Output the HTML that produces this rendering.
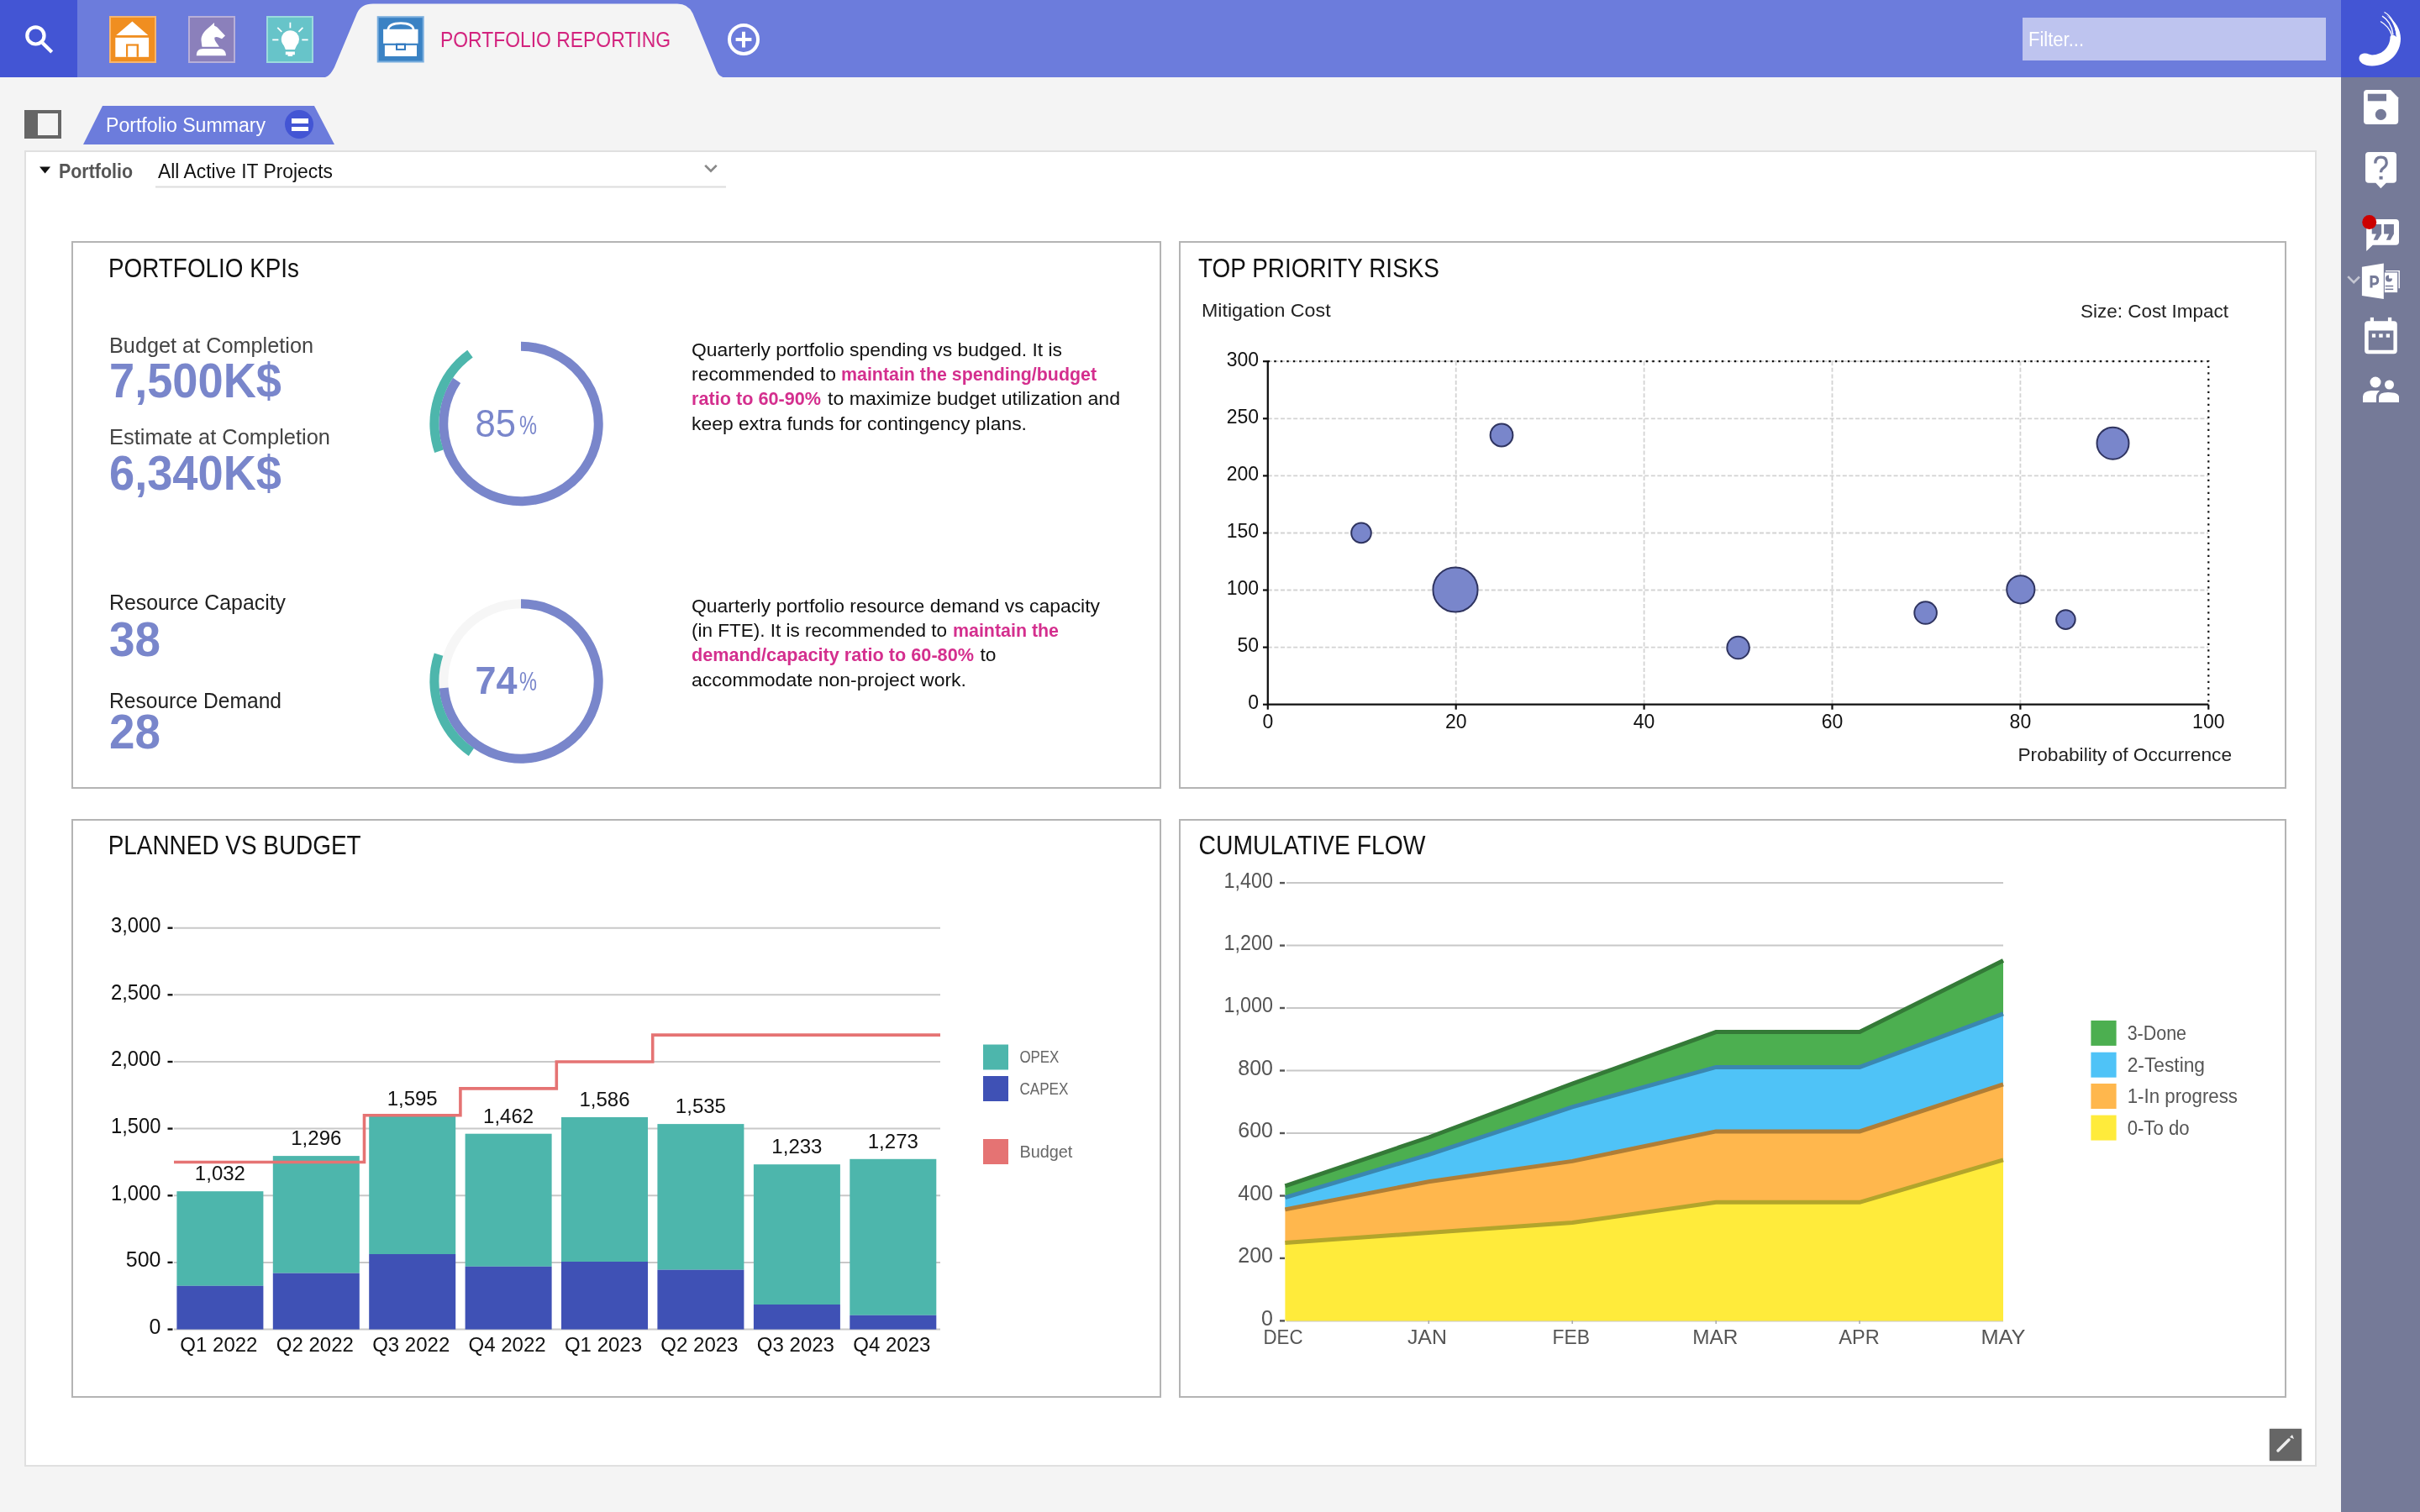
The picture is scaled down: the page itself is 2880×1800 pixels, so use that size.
<!DOCTYPE html>
<html><head><meta charset="utf-8">
<style>
html,body{margin:0;padding:0;width:2880px;height:1800px;overflow:hidden;background:#f4f4f4;font-family:"Liberation Sans",sans-serif;}
.abs{position:absolute;}
svg{position:absolute;left:0;top:0;overflow:visible;will-change:transform}
text{font-family:"Liberation Sans",sans-serif;}
</style></head><body>
<!-- top bar -->
<div class="abs" style="left:0;top:0;width:2786px;height:92px;background:#6c7cdc"></div>
<div class="abs" style="left:0;top:0;width:92px;height:92px;background:#4355d4"></div>
<!-- sidebar -->
<div class="abs" style="left:2786px;top:0;width:94px;height:1800px;background:#757a98"></div>
<div class="abs" style="left:2786px;top:0;width:94px;height:92px;background:#4355d4"></div>
<!-- filter -->
<div class="abs" style="left:2407px;top:21px;width:361px;height:51px;background:#bec4ef"></div>
<!-- content panel -->
<div class="abs" style="left:29px;top:179px;width:2724px;height:1563px;background:#fff;border:2px solid #e0e0e0"></div>
<!-- panels -->
<div class="abs" style="left:85px;top:287px;width:1293px;height:648px;border:2px solid #b4b4b4"></div>
<div class="abs" style="left:1403px;top:287px;width:1314px;height:648px;border:2px solid #b4b4b4"></div>
<div class="abs" style="left:85px;top:975px;width:1293px;height:685px;border:2px solid #b4b4b4"></div>
<div class="abs" style="left:1403px;top:975px;width:1314px;height:685px;border:2px solid #b4b4b4"></div>
<!-- pencil button -->
<div class="abs" style="left:2701px;top:1701px;width:38px;height:38px;background:#666;box-shadow:0 0 2px rgba(0,0,0,0.35)"></div>

<svg id="chrome" width="2880" height="1800" viewBox="0 0 2880 1800">
  <!-- active tab -->
  <path d="M383 92.5 C390 92.5 394 88 398 80 L425 15.5 C429 8 434 4.6 444 4.6 L806 4.6 Q819 4.6 824.5 16 L852.5 84 Q856 92.5 864 92.5 Z" fill="#f4f4f4"/>
  <!-- search icon -->
  <circle cx="42.4" cy="42.4" r="10.1" fill="none" stroke="#fff" stroke-width="4.2"/>
  <line x1="50.5" y1="51" x2="61.7" y2="62" stroke="#fff" stroke-width="4.2"/>
  <!-- home -->
  <rect x="131" y="20" width="54" height="54" fill="#f08e20" stroke="#f6b56f" stroke-width="2"/>
  <path d="M157.4 25.6 L176.3 42.1 L138.2 42.1 Z" fill="#fff"/>
  <rect x="137.3" y="44.8" width="39.8" height="23" fill="#fff"/>
  <rect x="150" y="52.4" width="15" height="15.4" fill="#f08e20"/>
  <rect x="152.2" y="54.6" width="10.4" height="13.2" fill="#fff"/>
  <!-- knight -->
  <rect x="225" y="20" width="54" height="54" fill="#8b80bb" stroke="#b7afd8" stroke-width="2"/>
  <path d="M255 27 L250 31.5 C244 36 239 42 239.5 48 C240 52 240 54 240.5 55.7 L261 55.7 C258 51 254.5 48 255.5 44.6 C257 43.5 259 44 260 44.5 L264 46.3 L268 42.4 L259 33 C257.5 31.5 256 31 255 30.5 Z" fill="#fff"/>
  <path d="M233.8 66.3 C233.8 61 236 58 242 58 L261 58 C266 58 268.9 61 268.9 66.3 Z" fill="#fff"/>
  <!-- bulb -->
  <rect x="318" y="20" width="54" height="54" fill="#67c4c9" stroke="#9bdbdd" stroke-width="2"/>
  <circle cx="345.4" cy="46.8" r="10.6" fill="#fff"/>
  <path d="M336.5 51 L354.3 51 L350.9 59 L339.8 59 Z" fill="#fff"/>
  <rect x="339.8" y="61.5" width="11.1" height="3.7" fill="#fff"/>
  <rect x="342.6" y="65" width="5.6" height="2" fill="#fff"/>
  <g stroke="#fff" stroke-width="1.8"><line x1="345.4" y1="26.7" x2="345.4" y2="33.4"/><line x1="324.2" y1="47.4" x2="331.4" y2="47.4"/><line x1="359.3" y1="47.4" x2="366.6" y2="47.4"/><line x1="330.3" y1="32.9" x2="335.3" y2="37.9"/><line x1="360.4" y1="32.9" x2="355.4" y2="37.9"/></g>
  <!-- briefcase -->
  <rect x="449.7" y="20.2" width="54" height="53.3" fill="#3a82c4" stroke="#7aaede" stroke-width="2"/>
  <path d="M461.8 35.5 C462.5 29.5 469.5 27.7 477 27.7 C484.5 27.7 491.5 29.5 492.2 35.5" fill="none" stroke="#fff" stroke-width="2.7"/>
  <rect x="456.1" y="34.8" width="41.4" height="16.9" fill="#fff"/>
  <rect x="457.9" y="53.9" width="38.1" height="13.1" fill="#fff"/>
  <rect x="471" y="51.7" width="12" height="8.2" fill="#2f78c0"/>
  <rect x="473" y="53.9" width="8" height="4" fill="#fff"/>
  <!-- plus circle -->
  <circle cx="885" cy="47" r="17" fill="none" stroke="#fff" stroke-width="4"/>
  <path d="M885 37.7 V56.5 M875.6 47.1 H894.4" stroke="#fff" stroke-width="4"/>
  <!-- sidebar toggle -->
  <rect x="31" y="133" width="40" height="30" fill="none" stroke="#666" stroke-width="4"/>
  <rect x="29" y="131" width="16" height="34" fill="#666"/>
  <!-- portfolio summary tab -->
  <path d="M99 172 L122 126 L374 126 L398 172 Z" fill="#6c7cdc"/>
  <circle cx="356" cy="148" r="17" fill="#4355d4"/>
  <rect x="347" y="141" width="20" height="6" fill="#fff"/>
  <rect x="347" y="151" width="20" height="5" fill="#fff"/>
  <!-- dropdown -->
  <path d="M47 198.6 H60.1 L53.6 206.6 Z" fill="#111"/>
  <line x1="185" y1="222.5" x2="864" y2="222.5" stroke="#ddd" stroke-width="2"/>
  <path d="M839.2 196.9 L846 203.6 L852.7 196.9" fill="none" stroke="#888" stroke-width="2.7"/>
  <!-- logo -->
  <path d="M2840 18 C2851 25 2857 35 2857 46 C2857 64 2842 78.5 2823 78.5 C2813 78.5 2807.5 74 2807.5 69.5 C2807.5 65 2811 63.5 2815 63.5 C2818 63.5 2820 65.4 2823 65.4 C2836 65.4 2844.5 55 2844.5 44 C2845 41 2849 41 2852 44 C2851 33 2847 24 2840 18 Z" fill="#fff"/>
  <g fill="none" stroke="#fff" stroke-width="1.4">
  <path d="M2837.5 14.5 C2846 19 2851 29 2852.5 43"/>
  <path d="M2835 19.2 C2841.5 23 2846.5 31 2848 41.5"/>
  <path d="M2833 25.5 C2839 29 2844.5 35 2846.5 42"/>
  </g>
  <!-- save -->
  <path d="M2817 107 H2845 L2854.2 116.3 V144 Q2854.2 148 2850.2 148 H2817 Q2813 148 2813 144 V111 Q2813 107 2817 107 Z" fill="#fff"/>
  <rect x="2817.8" y="111.7" width="22.2" height="8.6" fill="#757a98"/>
  <circle cx="2833.4" cy="136.4" r="6.6" fill="#757a98"/>
  <!-- help -->
  <path d="M2819 181 H2848 Q2852 181 2852 185 V213.7 Q2852 217.7 2848 217.7 H2839.8 L2833.3 224.2 L2827.3 217.7 H2819 Q2815 217.7 2815 213.7 V185 Q2815 181 2819 181 Z" fill="#fff"/>
  <path d="M2826.8 194.5 Q2826.8 187.2 2833.5 187.2 Q2840.2 187.2 2840.2 193.8 Q2840.2 197.8 2836 200.3 Q2833.5 202 2833.5 205.2" fill="none" stroke="#757a98" stroke-width="3.3"/>
  <rect x="2831.5" y="209.8" width="4.1" height="3.8" fill="#757a98"/>
  <!-- quote -->
  <path d="M2819 261 H2851 Q2855 261 2855 265 V287.8 Q2855 291.8 2851 291.8 H2823.8 L2816.2 299 V265 Q2816.2 261 2819 261 Z" fill="#fff"/>
  <path d="M2822.7 267 H2834.1 V278.5 L2829.5 285.7 H2824.6 L2828 278.5 H2822.7 Z M2837.1 267 H2848.9 V278.5 L2844.8 285.7 H2839.8 L2843.2 278.5 H2837.1 Z" fill="#757a98"/>
  <circle cx="2819.7" cy="264.6" r="8.5" fill="#cc0000"/>
  <!-- ppt -->
  <path d="M2794.2 329.1 L2801.2 336.2 L2807.9 329.5" fill="none" stroke="#c4c6d2" stroke-width="2.6"/>
  <path d="M2810.9 317.7 L2836.8 313.5 V356.1 L2810.9 351.9 Z" fill="#fff"/>
  <path d="M2822 342.5 V329.5 H2825.5 Q2829.7 329.5 2829.7 333.7 Q2829.7 337.9 2825.5 337.9 H2822" fill="none" stroke="#757a98" stroke-width="3"/>
  <rect x="2837.9" y="324.5" width="15.2" height="23.6" fill="#fff"/>
  <path d="M2839 322.6 H2855.2 V343.2" fill="none" stroke="#fff" stroke-width="1.4"/>
  <path d="M2843 327.5 A4 4 0 1 0 2847 331.5 H2843 Z" fill="#757a98"/>
  <rect x="2838.7" y="339.8" width="9.5" height="1.5" fill="#757a98"/>
  <rect x="2838.7" y="343.6" width="9.5" height="1.5" fill="#757a98"/>
  <!-- calendar -->
  <path d="M2818.1 382.3 H2848.8 Q2852.8 382.3 2852.8 386.3 V417.2 Q2852.8 421.2 2848.8 421.2 H2818.1 Q2814.1 421.2 2814.1 417.2 V386.3 Q2814.1 382.3 2818.1 382.3 Z M2818.7 393.4 V416.8 H2848.4 V393.4 Z" fill="#fff" fill-rule="evenodd"/>
  <rect x="2820.8" y="377.9" width="4.2" height="5" fill="#fff"/>
  <rect x="2841.9" y="377.9" width="4.3" height="5" fill="#fff"/>
  <rect x="2822.9" y="397.4" width="4.2" height="4.3" fill="#fff"/>
  <rect x="2831.2" y="397.4" width="4.5" height="4.3" fill="#fff"/>
  <rect x="2839.7" y="397.4" width="4.3" height="4.3" fill="#fff"/>
  <!-- people -->
  <circle cx="2827" cy="455" r="6.5" fill="#fff"/>
  <circle cx="2843.5" cy="458" r="5.5" fill="#fff"/>
  <path d="M2812 479 V472 Q2812 466 2822 465 L2832 465 Q2828 469 2828 472 V479 Z" fill="#fff"/>
  <path d="M2831 479 V473 Q2831 467 2842 467 Q2855 467 2855 473 V479 Z" fill="#fff"/>
  <!-- pencil -->
  <path d="M2711 1727 L2724 1714" stroke="#eee" stroke-width="3.5" stroke-linecap="round"/>
  <path d="M2725 1711 L2728 1708 L2730 1713 Z" fill="#eee"/>
</svg>

<svg id="texts" width="2880" height="1800" viewBox="0 0 2880 1800">
  <text x="524" y="55.5" font-size="26" fill="#d3237e" textLength="274" lengthAdjust="spacingAndGlyphs">PORTFOLIO REPORTING</text>
  <text x="2414" y="55" font-size="23" fill="#fff" textLength="66" lengthAdjust="spacingAndGlyphs">Filter...</text>
  <text x="126" y="156.5" font-size="23.5" fill="#fff" textLength="190" lengthAdjust="spacingAndGlyphs">Portfolio Summary</text>
  <text x="70" y="212" font-size="23.5" font-weight="bold" fill="#555" textLength="88" lengthAdjust="spacingAndGlyphs">Portfolio</text>
  <text x="188" y="212" font-size="23.5" fill="#111" textLength="208" lengthAdjust="spacingAndGlyphs">All Active IT Projects</text>
</svg>

<svg id="kpi" width="2880" height="1800" viewBox="0 0 2880 1800">
  <text x="129" y="330" font-size="30.5" fill="#111" textLength="227" lengthAdjust="spacingAndGlyphs">PORTFOLIO KPIs</text>
  <text x="130" y="420" font-size="25" fill="#444" textLength="243" lengthAdjust="spacingAndGlyphs">Budget at Completion</text>
  <text x="130" y="473" font-size="57.5" font-weight="bold" fill="#7986cb" textLength="205" lengthAdjust="spacingAndGlyphs">7,500K$</text>
  <text x="130" y="529" font-size="25" fill="#444" textLength="263" lengthAdjust="spacingAndGlyphs">Estimate at Completion</text>
  <text x="130" y="583" font-size="57.5" font-weight="bold" fill="#7986cb" textLength="205" lengthAdjust="spacingAndGlyphs">6,340K$</text>
  <text x="130" y="726" font-size="25" fill="#222" textLength="210" lengthAdjust="spacingAndGlyphs">Resource Capacity</text>
  <text x="130" y="781" font-size="57.5" font-weight="bold" fill="#7986cb" textLength="61" lengthAdjust="spacingAndGlyphs">38</text>
  <text x="130" y="843" font-size="25" fill="#222" textLength="205" lengthAdjust="spacingAndGlyphs">Resource Demand</text>
  <text x="130" y="891" font-size="57.5" font-weight="bold" fill="#7986cb" textLength="61" lengthAdjust="spacingAndGlyphs">28</text>

    <path d="M620.00 412.30 A92.2 92.2 0 1 1 543.56 452.94" fill="none" stroke="#7986cb" stroke-width="11"/>
  <path d="M522.38 537.35 A103 103 0 0 1 559.46 421.17" fill="none" stroke="#4db6ac" stroke-width="11"/>
  <text x="565.5" y="520" font-size="46.5" fill="#7986cb" textLength="48.5" lengthAdjust="spacingAndGlyphs">85</text>
  <text x="618" y="516.5" font-size="31" fill="#7986cb" textLength="21" lengthAdjust="spacingAndGlyphs">%</text>

  <circle cx="620" cy="811" r="92.2" fill="none" stroke="#f6f6f6" stroke-width="11"/>
  <path d="M620.00 718.80 A92.2 92.2 0 1 1 528.15 819.04" fill="none" stroke="#7986cb" stroke-width="11"/>
  <path d="M560.92 895.37 A103 103 0 0 1 522.04 779.17" fill="none" stroke="#4db6ac" stroke-width="11"/>
  <text x="565.5" y="825.5" font-size="46.5" font-weight="bold" fill="#7986cb" textLength="50" lengthAdjust="spacingAndGlyphs">74</text>
  <text x="618" y="822" font-size="31" fill="#7986cb" textLength="21" lengthAdjust="spacingAndGlyphs">%</text>

  <g font-size="21.5" fill="#111">
  <text x="823" y="424" textLength="441" lengthAdjust="spacingAndGlyphs">Quarterly portfolio spending vs budged. It is</text>
  <text x="823" y="453" textLength="172" lengthAdjust="spacingAndGlyphs">recommended to</text>
  <text x="1001" y="453" font-weight="bold" fill="#d42f8e" textLength="304" lengthAdjust="spacingAndGlyphs">maintain the spending/budget</text>
  <text x="823" y="482" font-weight="bold" fill="#d42f8e" textLength="154" lengthAdjust="spacingAndGlyphs">ratio to 60-90%</text>
  <text x="985" y="482" textLength="348" lengthAdjust="spacingAndGlyphs">to maximize budget utilization and</text>
  <text x="823" y="511.5" textLength="399" lengthAdjust="spacingAndGlyphs">keep extra funds for contingency plans.</text>

  <text x="823" y="729" textLength="486" lengthAdjust="spacingAndGlyphs">Quarterly portfolio resource demand vs capacity</text>
  <text x="823" y="758" textLength="304" lengthAdjust="spacingAndGlyphs">(in FTE). It is recommended to</text>
  <text x="1134" y="758" font-weight="bold" fill="#d42f8e" textLength="126" lengthAdjust="spacingAndGlyphs">maintain the</text>
  <text x="823" y="787" font-weight="bold" fill="#d42f8e" textLength="336" lengthAdjust="spacingAndGlyphs">demand/capacity ratio to 60-80%</text>
  <text x="1166.5" y="787" textLength="19" lengthAdjust="spacingAndGlyphs">to</text>
  <text x="823" y="816.5" textLength="327" lengthAdjust="spacingAndGlyphs">accommodate non-project work.</text>
  </g>
</svg>
<!--CHARTS--><svg id="risk" width="2880" height="1800" viewBox="0 0 2880 1800">
<text x="1426" y="330.4" font-size="30.5" fill="#111" textLength="287" lengthAdjust="spacingAndGlyphs">TOP PRIORITY RISKS</text>
<text x="1430" y="377" font-size="21.5" fill="#222" textLength="153.6" lengthAdjust="spacingAndGlyphs">Mitigation Cost</text>
<text x="2476" y="377.6" font-size="21.5" fill="#222" textLength="176" lengthAdjust="spacingAndGlyphs">Size: Cost Impact</text>
<text x="2401.5" y="906" font-size="21.5" fill="#222" textLength="254.5" lengthAdjust="spacingAndGlyphs">Probability of Occurrence</text>
<g stroke="#d3d3d3" stroke-width="1.8" stroke-dasharray="5 2.6"><line x1="1508.8" y1="770.6" x2="2628.3" y2="770.6"/><line x1="1508.8" y1="702.5" x2="2628.3" y2="702.5"/><line x1="1508.8" y1="634.5" x2="2628.3" y2="634.5"/><line x1="1508.8" y1="566.4" x2="2628.3" y2="566.4"/><line x1="1508.8" y1="498.3" x2="2628.3" y2="498.3"/><line x1="1508.8" y1="430.2" x2="2628.3" y2="430.2"/><line x1="1732.7" y1="430.2" x2="1732.7" y2="838.7"/><line x1="1956.6" y1="430.2" x2="1956.6" y2="838.7"/><line x1="2180.5" y1="430.2" x2="2180.5" y2="838.7"/><line x1="2404.4" y1="430.2" x2="2404.4" y2="838.7"/></g>
<path d="M1508.8 430.2 H2628.3 V838.7" fill="none" stroke="#111" stroke-width="2.2" stroke-dasharray="2.4 5.1"/>
<path d="M1508.8 429.2 V838.7 H2628.3" fill="none" stroke="#111" stroke-width="2.3"/>
<g stroke="#111" stroke-width="2.2"><line x1="1503" y1="838.7" x2="1508.8" y2="838.7"/><line x1="1503" y1="770.6" x2="1508.8" y2="770.6"/><line x1="1503" y1="702.5" x2="1508.8" y2="702.5"/><line x1="1503" y1="634.5" x2="1508.8" y2="634.5"/><line x1="1503" y1="566.4" x2="1508.8" y2="566.4"/><line x1="1503" y1="498.3" x2="1508.8" y2="498.3"/><line x1="1503" y1="430.2" x2="1508.8" y2="430.2"/><line x1="1508.8" y1="838.7" x2="1508.8" y2="844.7"/><line x1="1732.7" y1="838.7" x2="1732.7" y2="844.7"/><line x1="1956.6" y1="838.7" x2="1956.6" y2="844.7"/><line x1="2180.5" y1="838.7" x2="2180.5" y2="844.7"/><line x1="2404.4" y1="838.7" x2="2404.4" y2="844.7"/><line x1="2628.3" y1="838.7" x2="2628.3" y2="844.7"/></g>
<g font-size="23" fill="#111"><text x="1498" y="844.3" text-anchor="end">0</text><text x="1498" y="776.2" text-anchor="end">50</text><text x="1498" y="708.1" text-anchor="end">100</text><text x="1498" y="640.1" text-anchor="end">150</text><text x="1498" y="572.0" text-anchor="end">200</text><text x="1498" y="503.9" text-anchor="end">250</text><text x="1498" y="435.8" text-anchor="end">300</text><text x="1508.8" y="867" text-anchor="middle">0</text><text x="1732.7" y="867" text-anchor="middle">20</text><text x="1956.6" y="867" text-anchor="middle">40</text><text x="2180.5" y="867" text-anchor="middle">60</text><text x="2404.4" y="867" text-anchor="middle">80</text><text x="2628.3" y="867" text-anchor="middle">100</text></g>
<g fill="#7986cb" stroke="#2f3460" stroke-width="2"><circle cx="1620" cy="634.4" r="11.8"/><circle cx="1732" cy="702" r="26.6"/><circle cx="1787" cy="518" r="13.4"/><circle cx="2068.6" cy="771" r="13.3"/><circle cx="2291.6" cy="729.5" r="13.3"/><circle cx="2404.8" cy="701.8" r="16.6"/><circle cx="2458.4" cy="737.6" r="11.3"/><circle cx="2514.5" cy="527.7" r="19"/></g>
</svg>
<svg id="pvb" width="2880" height="1800" viewBox="0 0 2880 1800">
<text x="128.7" y="1017" font-size="30.5" fill="#111" textLength="301" lengthAdjust="spacingAndGlyphs">PLANNED VS BUDGET</text>
<g stroke="#c8c8c8" stroke-width="2"><line x1="207" y1="1582.6" x2="1119" y2="1582.6"/><line x1="207" y1="1502.9" x2="1119" y2="1502.9"/><line x1="207" y1="1423.3" x2="1119" y2="1423.3"/><line x1="207" y1="1343.6" x2="1119" y2="1343.6"/><line x1="207" y1="1264.0" x2="1119" y2="1264.0"/><line x1="207" y1="1184.3" x2="1119" y2="1184.3"/><line x1="207" y1="1104.7" x2="1119" y2="1104.7"/></g>
<g stroke="#111" stroke-width="2.4"><line x1="199.5" y1="1582.6" x2="205.5" y2="1582.6"/><line x1="199.5" y1="1502.9" x2="205.5" y2="1502.9"/><line x1="199.5" y1="1423.3" x2="205.5" y2="1423.3"/><line x1="199.5" y1="1343.6" x2="205.5" y2="1343.6"/><line x1="199.5" y1="1264.0" x2="205.5" y2="1264.0"/><line x1="199.5" y1="1184.3" x2="205.5" y2="1184.3"/><line x1="199.5" y1="1104.7" x2="205.5" y2="1104.7"/></g>
<g font-size="25" fill="#111"><text x="191.5" y="1587.8" text-anchor="end">0</text><text x="191.5" y="1508.1" text-anchor="end">500</text><text x="191.5" y="1428.5" text-anchor="end" textLength="59.5" lengthAdjust="spacingAndGlyphs">1,000</text><text x="191.5" y="1348.8" text-anchor="end" textLength="59.5" lengthAdjust="spacingAndGlyphs">1,500</text><text x="191.5" y="1269.2" text-anchor="end" textLength="59.5" lengthAdjust="spacingAndGlyphs">2,000</text><text x="191.5" y="1189.5" text-anchor="end" textLength="59.5" lengthAdjust="spacingAndGlyphs">2,500</text><text x="191.5" y="1109.9" text-anchor="end" textLength="59.5" lengthAdjust="spacingAndGlyphs">3,000</text></g>
<rect x="210.4" y="1418.2" width="103" height="112.6" fill="#4db6ac"/><rect x="210.4" y="1530.8" width="103" height="51.8" fill="#3f51b5"/><rect x="324.8" y="1376.1" width="103" height="139.6" fill="#4db6ac"/><rect x="324.8" y="1515.7" width="103" height="66.9" fill="#3f51b5"/><rect x="439.2" y="1328.5" width="103" height="164.5" fill="#4db6ac"/><rect x="439.2" y="1493.0" width="103" height="89.6" fill="#3f51b5"/><rect x="553.6" y="1349.7" width="103" height="158.1" fill="#4db6ac"/><rect x="553.6" y="1507.8" width="103" height="74.8" fill="#3f51b5"/><rect x="668.0" y="1330.0" width="103" height="172.0" fill="#4db6ac"/><rect x="668.0" y="1502.0" width="103" height="80.6" fill="#3f51b5"/><rect x="782.4" y="1338.1" width="103" height="173.6" fill="#4db6ac"/><rect x="782.4" y="1511.7" width="103" height="70.9" fill="#3f51b5"/><rect x="896.9" y="1386.2" width="103" height="166.8" fill="#4db6ac"/><rect x="896.9" y="1553.0" width="103" height="29.6" fill="#3f51b5"/><rect x="1011.3" y="1379.8" width="103" height="186.0" fill="#4db6ac"/><rect x="1011.3" y="1565.8" width="103" height="16.8" fill="#3f51b5"/>
<g font-size="24" fill="#111"><text x="261.9" y="1405.2" text-anchor="middle">1,032</text><text x="376.3" y="1363.1" text-anchor="middle">1,296</text><text x="490.7" y="1315.5" text-anchor="middle">1,595</text><text x="605.1" y="1336.7" text-anchor="middle">1,462</text><text x="719.5" y="1317.0" text-anchor="middle">1,586</text><text x="833.9" y="1325.1" text-anchor="middle">1,535</text><text x="948.4" y="1373.2" text-anchor="middle">1,233</text><text x="1062.8" y="1366.8" text-anchor="middle">1,273</text><text x="260.4" y="1609" text-anchor="middle">Q1 2022</text><text x="374.8" y="1609" text-anchor="middle">Q2 2022</text><text x="489.2" y="1609" text-anchor="middle">Q3 2022</text><text x="603.6" y="1609" text-anchor="middle">Q4 2022</text><text x="718.0" y="1609" text-anchor="middle">Q1 2023</text><text x="832.4" y="1609" text-anchor="middle">Q2 2023</text><text x="946.9" y="1609" text-anchor="middle">Q3 2023</text><text x="1061.3" y="1609" text-anchor="middle">Q4 2023</text></g>
<path d="M207 1383.5 H433.5 V1327.7 H547.9 V1295.9 H662.3 V1264.0 H776.7 V1232.1 H1119" fill="none" stroke="#e57373" stroke-width="3.6"/>
<rect x="1170" y="1243.5" width="30" height="30" fill="#4db6ac"/>
<rect x="1170" y="1281" width="30" height="30" fill="#3f51b5"/>
<rect x="1170" y="1356" width="30" height="30" fill="#e57373"/>
<g font-size="20" fill="#666"><text x="1213.4" y="1265.4" textLength="47" lengthAdjust="spacingAndGlyphs">OPEX</text><text x="1213.4" y="1303" textLength="58" lengthAdjust="spacingAndGlyphs">CAPEX</text><text x="1213.4" y="1378" textLength="63" lengthAdjust="spacingAndGlyphs">Budget</text></g>
</svg>
<svg id="cf" width="2880" height="1800" viewBox="0 0 2880 1800">
<text x="1426.5" y="1017" font-size="30.5" fill="#111" textLength="270" lengthAdjust="spacingAndGlyphs">CUMULATIVE FLOW</text>
<g stroke="#c8c8c8" stroke-width="2"><line x1="1531" y1="1572.4" x2="2384" y2="1572.4"/><line x1="1531" y1="1497.9" x2="2384" y2="1497.9"/><line x1="1531" y1="1423.5" x2="2384" y2="1423.5"/><line x1="1531" y1="1349.0" x2="2384" y2="1349.0"/><line x1="1531" y1="1274.5" x2="2384" y2="1274.5"/><line x1="1531" y1="1200.0" x2="2384" y2="1200.0"/><line x1="1531" y1="1125.6" x2="2384" y2="1125.6"/><line x1="1531" y1="1051.1" x2="2384" y2="1051.1"/></g>
<g stroke="#555" stroke-width="2.4"><line x1="1523" y1="1572.4" x2="1529" y2="1572.4"/><line x1="1523" y1="1497.9" x2="1529" y2="1497.9"/><line x1="1523" y1="1423.5" x2="1529" y2="1423.5"/><line x1="1523" y1="1349.0" x2="1529" y2="1349.0"/><line x1="1523" y1="1274.5" x2="1529" y2="1274.5"/><line x1="1523" y1="1200.0" x2="1529" y2="1200.0"/><line x1="1523" y1="1125.6" x2="1529" y2="1125.6"/><line x1="1523" y1="1051.1" x2="1529" y2="1051.1"/></g>
<g font-size="25" fill="#555"><text x="1515" y="1577.8" text-anchor="end">0</text><text x="1515" y="1503.3" text-anchor="end">200</text><text x="1515" y="1428.9" text-anchor="end">400</text><text x="1515" y="1354.4" text-anchor="end">600</text><text x="1515" y="1279.9" text-anchor="end">800</text><text x="1515" y="1205.4" text-anchor="end" textLength="58.5" lengthAdjust="spacingAndGlyphs">1,000</text><text x="1515" y="1131.0" text-anchor="end" textLength="58.5" lengthAdjust="spacingAndGlyphs">1,200</text><text x="1515" y="1056.5" text-anchor="end" textLength="58.5" lengthAdjust="spacingAndGlyphs">1,400</text></g>
<polygon points="1529.4,1479.4 1700.3,1467.5 1871.2,1455.6 2042.2,1431.3 2213.1,1431.3 2384.0,1380.9 2384.0,1572.4 2213.1,1572.4 2042.2,1572.4 1871.2,1572.4 1700.3,1572.4 1529.4,1572.4" fill="#ffeb3b"/><polygon points="1529.4,1439.9 1700.3,1406.7 1871.2,1382.4 2042.2,1346.9 2213.1,1346.9 2384.0,1290.9 2384.0,1380.9 2213.1,1431.3 2042.2,1431.3 1871.2,1455.6 1700.3,1467.5 1529.4,1479.4" fill="#ffb74d"/><polygon points="1529.4,1425.7 1700.3,1374.6 1871.2,1317.8 2042.2,1270.4 2213.1,1270.4 2384.0,1206.9 2384.0,1290.9 2213.1,1346.9 2042.2,1346.9 1871.2,1382.4 1700.3,1406.7 1529.4,1439.9" fill="#4fc3f7"/><polygon points="1529.4,1411.9 1700.3,1354.0 1871.2,1290.2 2042.2,1228.6 2213.1,1228.6 2384.0,1143.5 2384.0,1206.9 2213.1,1270.4 2042.2,1270.4 1871.2,1317.8 1700.3,1374.6 1529.4,1425.7" fill="#4caf50"/>
<polyline points="1529.4,1479.4 1700.3,1467.5 1871.2,1455.6 2042.2,1431.3 2213.1,1431.3 2384.0,1380.9" fill="none" stroke="#b3a52b" stroke-width="5"/><polyline points="1529.4,1439.9 1700.3,1406.7 1871.2,1382.4 2042.2,1346.9 2213.1,1346.9 2384.0,1290.9" fill="none" stroke="#b07e36" stroke-width="5"/><polyline points="1529.4,1425.7 1700.3,1374.6 1871.2,1317.8 2042.2,1270.4 2213.1,1270.4 2384.0,1206.9" fill="none" stroke="#3a87b0" stroke-width="5"/><polyline points="1529.4,1411.9 1700.3,1354.0 1871.2,1290.2 2042.2,1228.6 2213.1,1228.6 2384.0,1143.5" fill="none" stroke="#347a37" stroke-width="5"/>
<g stroke="#aaa" stroke-width="1.5"><line x1="1700.3" y1="1572" x2="1700.3" y2="1576"/><line x1="1871.2" y1="1572" x2="1871.2" y2="1576"/><line x1="2042.2" y1="1572" x2="2042.2" y2="1576"/><line x1="2213.1" y1="1572" x2="2213.1" y2="1576"/></g>
<g font-size="24" fill="#555"><text x="1527.0" y="1600" text-anchor="middle" textLength="47" lengthAdjust="spacingAndGlyphs">DEC</text><text x="1698.4" y="1600" text-anchor="middle" textLength="47" lengthAdjust="spacingAndGlyphs">JAN</text><text x="1869.8" y="1600" text-anchor="middle" textLength="44.5" lengthAdjust="spacingAndGlyphs">FEB</text><text x="2041.2" y="1600" text-anchor="middle" textLength="54" lengthAdjust="spacingAndGlyphs">MAR</text><text x="2212.6" y="1600" text-anchor="middle" textLength="48.5" lengthAdjust="spacingAndGlyphs">APR</text><text x="2384.0" y="1600" text-anchor="middle" textLength="53" lengthAdjust="spacingAndGlyphs">MAY</text></g>
<rect x="2488.4" y="1214.9" width="30.2" height="30" fill="#4caf50"/>
<text x="2531.7" y="1238.0" font-size="23" fill="#555" textLength="70.3" lengthAdjust="spacingAndGlyphs">3-Done</text>
<rect x="2488.4" y="1252.7" width="30.2" height="30" fill="#4fc3f7"/>
<text x="2531.7" y="1275.8" font-size="23" fill="#555" textLength="92.3" lengthAdjust="spacingAndGlyphs">2-Testing</text>
<rect x="2488.4" y="1290" width="30.2" height="30" fill="#ffb74d"/>
<text x="2531.7" y="1313.1" font-size="23" fill="#555" textLength="131.3" lengthAdjust="spacingAndGlyphs">1-In progress</text>
<rect x="2488.4" y="1327.6" width="30.2" height="30" fill="#ffeb3b"/>
<text x="2531.7" y="1350.7" font-size="23" fill="#555" textLength="73.8" lengthAdjust="spacingAndGlyphs">0-To do</text>
</svg><!--/CHARTS-->
</body></html>
